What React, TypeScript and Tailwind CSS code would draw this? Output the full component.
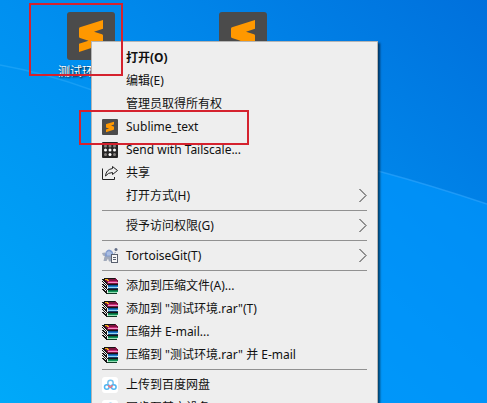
import type { ReactNode } from "react";

function SublimeIcon({ className }: { className: string }) {
  return (
    <svg viewBox="0 0 48 48" className={className} aria-hidden="true">
      <rect width="48" height="48" rx="3" fill="#4b4b4b" />
      <path d="M36 8 L13 15.300 Q12 15.700 12 16.700 V24.500 Q12 25.500 13 26 L21.500 28.800 L12 31.800 V40 L35 32.500 Q36 32 36 31 V23.500 Q36 22.500 35 22.200 L27 19.700 L36 16.800 Z" fill="#ff9800" />
    </svg>
  );
}

function TailscaleIcon() {
  return (
    <svg viewBox="0 0 16 16" className="size-4" aria-hidden="true">
      <rect width="16" height="16" rx="1" fill="#252525" />
      {[3.5, 8, 12.5].map((x) =>
        [4, 8, 12.5].map((y) => (
          <circle key={`${x}-${y}`} cx={x} cy={y} r="1.500" fill={y === 8 || (y === 12.5 && x === 8) ? "#ffffff" : "#85807e"} />
        )),
      )}
    </svg>
  );
}

function ShareIcon() {
  return (
    <svg viewBox="0 0 16 16" className="size-4" fill="none" stroke="#222" aria-hidden="true">
      <path d="M.5 3.500V14.500H12.500V12" />
      <path d="M10.500 1.500 15.500 5.500 10.500 9.500V7.500Q6 7.500 3.500 11Q4 4.500 10.500 3.500Z" strokeLinejoin="round" />
    </svg>
  );
}

function TortoiseIcon() {
  return (
    <svg viewBox="0 0 16 16" className="size-4" aria-hidden="true">
      <path d="M0 5 3 4.500 4 6 3.500 8.500 1 7.500Z" fill="#a3acbd" />
      <path d="M3 9Q2.500 2 7 1.500Q12 2 11.500 9Q7 11 3 9Z" fill="#829bcd" />
      <path d="M4.500 4.500 7 3 10 5 9 7.500H5Z" fill="#a9bde2" />
      <path d="M2.500 8.500 1.500 13H4.500L6 10.500 7 13.500H9V8.500Z" fill="#a0a9ba" />
      <circle cx="14" cy="1.500" r="1.500" fill="#626d86" />
      <path d="M12 5.500 14 4" stroke="#9aa4b8" />
      <rect x="9.500" y="6.500" width="6" height="8" fill="#f7f7f7" stroke="#59606e" />
      <path d="M11 9.500H14M11 11.500H14" stroke="#59606e" />
    </svg>
  );
}

function RarIcon() {
  return (
    <svg viewBox="0 0 16 16" className="size-4" shapeRendering="crispEdges" aria-hidden="true">
      <path d="M2 0H13L16 3V6H6L1 2Z" fill="#7d123f" />
      <path d="M2 0H13V1H3V2H2ZM0 1H2V2H3V3H4V4H5V6H16V7H5V11H16V12H5V16H4V15H3V14H2V13H1V12H0Z" fill="#151515" />
      <path d="M3 1H6V2H7V3H5V2H3Z" fill="#f0b51c" />
      <path d="M6 3H15V4H6Z" fill="#c92676" />
      <path d="M6 4H16V5H6Z" fill="#f58fc5" />
      <path d="M6 7H16V8H6Z" fill="#0d4f94" />
      <path d="M6 8H16V9H6Z" fill="#1f7fce" />
      <path d="M6 9H15V10H6Z" fill="#8fd3f4" />
      <path d="M6 10H16V11H6Z" fill="#123b67" />
      <path d="M6 12H16V13H6Z" fill="#06693d" />
      <path d="M6 13H16V14H6Z" fill="#12945a" />
      <path d="M6 14H15V15H6Z" fill="#93e1b4" />
      <path d="M5 15H15V16H5Z" fill="#123d28" />
      <path d="M0 2h1v1h1v1h1v1h1v1h1v1H4V6H3V5H2V4H1V3H0ZM0 4h1v1h1v1h1v1h1v1H3V7H2V6H0ZM0 7h1v1h1v1h1v1h1v1h1v1H4v-1H3v-1H2V9H1V8H0ZM0 9h1v1h1v1h1v1h1v1H3v-1H2v-1H0ZM0 12h1v1h1v1h1v1h1v1H0Z" fill="#eeeeee" />
    </svg>
  );
}

function BaiduIcon() {
  return (
    <svg viewBox="0 0 16 16" className="size-4" fill="none" aria-hidden="true">
      <rect width="16" height="16" rx="3" fill="white" />
      <circle cx="8.500" cy="6" r="2.700" stroke="#74c2f1" strokeWidth="1.500" />
      <circle cx="4.800" cy="10" r="2.300" stroke="#4fb5f1" strokeWidth="1.500" />
      <circle cx="11.800" cy="10" r="2.300" stroke="#4fb5f1" strokeWidth="1.500" />
      <path d="M6 8.200 8.400 10.500 10.600 8.200" stroke="#ee7280" strokeWidth="1.500" />
    </svg>
  );
}

function Chevron() {
  return (
    <svg viewBox="0 0 8 14" className="ml-auto h-3.5 w-2" fill="none" stroke="#333" aria-hidden="true">
      <path d="M.5 0 7 6.500 .5 13" />
    </svg>
  );
}

type Item = { label: string; icon?: ReactNode; bold?: boolean; submenu?: boolean };

const groups: Item[][] = [
  [
    { label: "打开(O)", bold: true },
    { label: "编辑(E)" },
    { label: "管理员取得所有权" },
    { label: "Sublime_text", icon: <SublimeIcon className="size-4" /> },
    { label: "Send with Tailscale...", icon: <TailscaleIcon /> },
    { label: "共享", icon: <ShareIcon /> },
    { label: "打开方式(H)", submenu: true },
  ],
  [{ label: "授予访问权限(G)", submenu: true }],
  [{ label: "TortoiseGit(T)", icon: <TortoiseIcon />, submenu: true }],
  [
    { label: "添加到压缩文件(A)...", icon: <RarIcon /> },
    { label: '添加到 "测试环境.rar"(T)', icon: <RarIcon /> },
    { label: "压缩并 E-mail...", icon: <RarIcon /> },
    { label: '压缩到 "测试环境.rar" 并 E-mail', icon: <RarIcon /> },
  ],
  [
    { label: "上传到百度网盘", icon: <BaiduIcon /> },
    { label: "同步至其它设备", icon: <BaiduIcon /> },
  ],
];

function MenuItem({ item }: { item: Item }) {
  return (
    <button
      type="button"
      role="menuitem"
      className={`flex h-[23px] w-full items-center gap-2 pr-2.5 pl-2.5 text-left whitespace-nowrap ${item.bold ? "font-bold" : ""}`}
    >
      <span className="size-4 shrink-0">{item.icon}</span>
      <span>{item.label}</span>
      {item.submenu && <Chevron />}
    </button>
  );
}

export default function App() {
  return (
    <main className="relative h-screen overflow-hidden bg-linear-to-tr from-[#00a9f9] via-[#0090f0] to-[#0070dc] font-['Noto_Sans','Noto_Sans_CJK_SC',sans-serif] text-xs text-[#111]">
      <svg viewBox="0 0 487 403" preserveAspectRatio="none" className="absolute inset-0 size-full" fill="none" aria-hidden="true">
        <path d="M378 171Q430 185 487 204V403H378Z" fill="#0098ff" fillOpacity=".6" />
        <path d="M0 65Q45 73 92 90" stroke="#4dbcff" strokeOpacity=".3" strokeWidth="1.500" />
        <path d="M378 171Q430 185 487 204" stroke="#3aacff" strokeOpacity=".5" strokeWidth="1.500" />
      </svg>

      <div className="relative flex gap-[76px] pt-3 pl-[53px]">
        <button type="button" className="flex w-[76px] flex-col items-center gap-1 text-white text-shadow-[1px_1px_2px_#000]">
          <SublimeIcon className="size-12" />
          <span className="leading-4">测试环境.txt</span>
        </button>
        <button type="button" aria-label="Sublime Text" className="flex w-[76px] flex-col items-center">
          <SublimeIcon className="size-12" />
        </button>
      </div>

      <div role="menu" className="absolute top-[41px] left-[91px] w-[287px] border border-[#b4b4b4] bg-[#eeeeee] py-1 shadow-[2px_2px_2px_#00000090]">
        {groups.map((group, index) => (
          <div key={index} role="group">
            {index > 0 && <hr className="mx-2.5 my-[3px] border-[#919191]" />}
            {group.map((item) => (
              <MenuItem key={item.label} item={item} />
            ))}
          </div>
        ))}
      </div>

      <div className="pointer-events-none absolute top-[3px] left-[29px] h-[73px] w-[94px] border-2 border-[#d5222e]" />
      <div className="pointer-events-none absolute top-[110px] left-[79px] h-[35px] w-[170px] border-2 border-[#d5222e]" />
    </main>
  );
}
